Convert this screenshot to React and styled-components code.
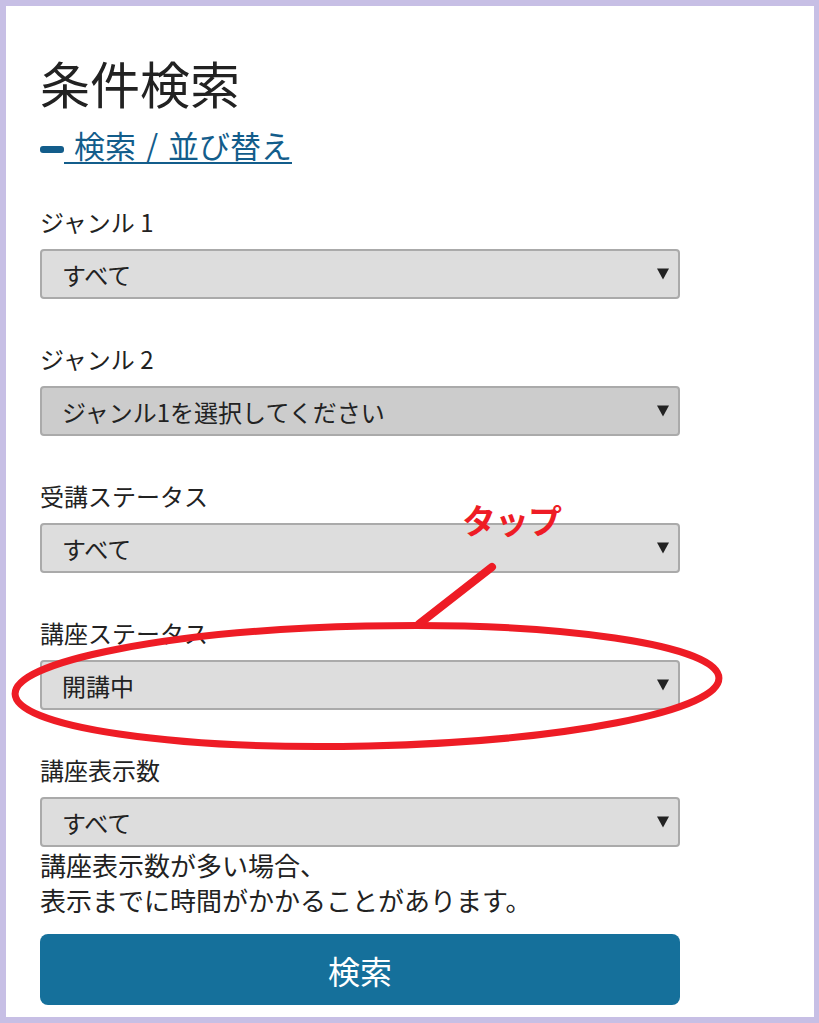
import styled, { createGlobalStyle } from 'styled-components'

const GlobalStyle = createGlobalStyle`
  html, body { margin: 0; padding: 0; }
  body {
    background: #c7bfe5;
    font-family: "Noto Sans CJK JP", "Noto Sans", sans-serif;
    color: #222;
  }
`

const Page = styled.div`
  position: relative;
  width: 819px;
  height: 1023px;
  box-sizing: border-box;
  padding: 6px 5px 6px 6px;
`

const Panel = styled.main`
  background: #fff;
  height: 100%;
  box-sizing: border-box;
  padding: 46px 0 0 34px;
`

const Title = styled.h1`
  margin: 0;
  font-size: 50px;
  font-weight: 400;
  line-height: 60px;
  color: #222;
`

const Toggle = styled.a`
  display: block;
  margin: 10px 0 38px;
  font-size: 31px;
  line-height: 45px;
  word-spacing: 3px;
  color: #135d8b;
  text-decoration: none;
  cursor: pointer;
  span {
    text-decoration: underline;
    text-decoration-thickness: 2px;
    text-underline-offset: 4px;
  }
`

const Bar = styled.i`
  display: inline-block;
  width: 24px;
  height: 7px;
  border-radius: 3px;
  background: #135d8b;
  vertical-align: middle;
`

const Form = styled.form`
  display: flex;
  flex-direction: column;
  width: 640px;
`

const Field = styled.div`
  margin-bottom: ${p => (p.$last ? '0' : '43px')};
`

const Label = styled.label`
  display: block;
  font-size: 24px;
  line-height: 34px;
  margin-bottom: 10px;
  color: #222;
`

const SelectWrap = styled.div`
  position: relative;
  &::after {
    content: '';
    position: absolute;
    right: 11px;
    top: 50%;
    transform: translateY(-50%);
    border-left: 6px solid transparent;
    border-right: 6px solid transparent;
    border-top: 11px solid #222;
    pointer-events: none;
  }
`

const Select = styled.select`
  appearance: none;
  display: block;
  width: 100%;
  height: 50px;
  box-sizing: border-box;
  padding: 0 40px 0 20px;
  border: 2px solid #aaa;
  border-radius: 4px;
  background: ${p => (p.disabled ? '#cccccc' : '#dddddd')};
  font-family: inherit;
  font-size: 24px;
  color: #222;
  opacity: 1;
`

const Note = styled.p`
  margin: 0;
  font-size: 26px;
  line-height: 35px;
  color: #222;
`

const SearchButton = styled.button`
  margin-top: 17px;
  width: 640px;
  height: 71px;
  border: none;
  border-radius: 8px;
  background: #15709b;
  color: #fff;
  font-family: inherit;
  font-size: 32px;
`

const Scribble = styled.svg`
  position: absolute;
  left: 0;
  top: 0;
  pointer-events: none;
`

const TapNote = styled.span`
  position: absolute;
  left: 462px;
  top: 503px;
  font-size: 34px;
  font-weight: 700;
  line-height: 1;
  color: #ee1c25;
  letter-spacing: -1px;
`

const fields = [
  { label: 'ジャンル 1', value: 'すべて' },
  { label: 'ジャンル 2', value: 'ジャンル1を選択してください', disabled: true },
  { label: '受講ステータス', value: 'すべて' },
  { label: '講座ステータス', value: '開講中' },
  { label: '講座表示数', value: 'すべて' },
]

export default function App() {
  return (
    <Page>
      <GlobalStyle />
      <Panel>
        <Title>条件検索</Title>
        <Toggle>
          <Bar />
          <span> 検索 / 並び替え</span>
        </Toggle>
        <Form onSubmit={e => e.preventDefault()}>
          {fields.map((f, i) => (
            <Field key={f.label} $last={i === fields.length - 1}>
              <Label>{f.label}</Label>
              <SelectWrap>
                <Select defaultValue={f.value} disabled={f.disabled}>
                  <option>{f.value}</option>
                </Select>
              </SelectWrap>
            </Field>
          ))}
          <Note>
            講座表示数が多い場合、
            <br />
            表示までに時間がかかることがあります。
          </Note>
          <SearchButton type="submit">検索</SearchButton>
        </Form>
      </Panel>

      <Scribble width="819" height="1023" viewBox="0 0 819 1023">
        <ellipse
          cx="367"
          cy="686"
          rx="352"
          ry="60"
          fill="none"
          stroke="#ee1c25"
          strokeWidth="7"
          transform="rotate(-1.3 367 686)"
        />
        <line x1="492" y1="567" x2="419" y2="624" stroke="#ee1c25" strokeWidth="8" strokeLinecap="round" />
      </Scribble>
      <TapNote>タップ</TapNote>
    </Page>
  )
}
